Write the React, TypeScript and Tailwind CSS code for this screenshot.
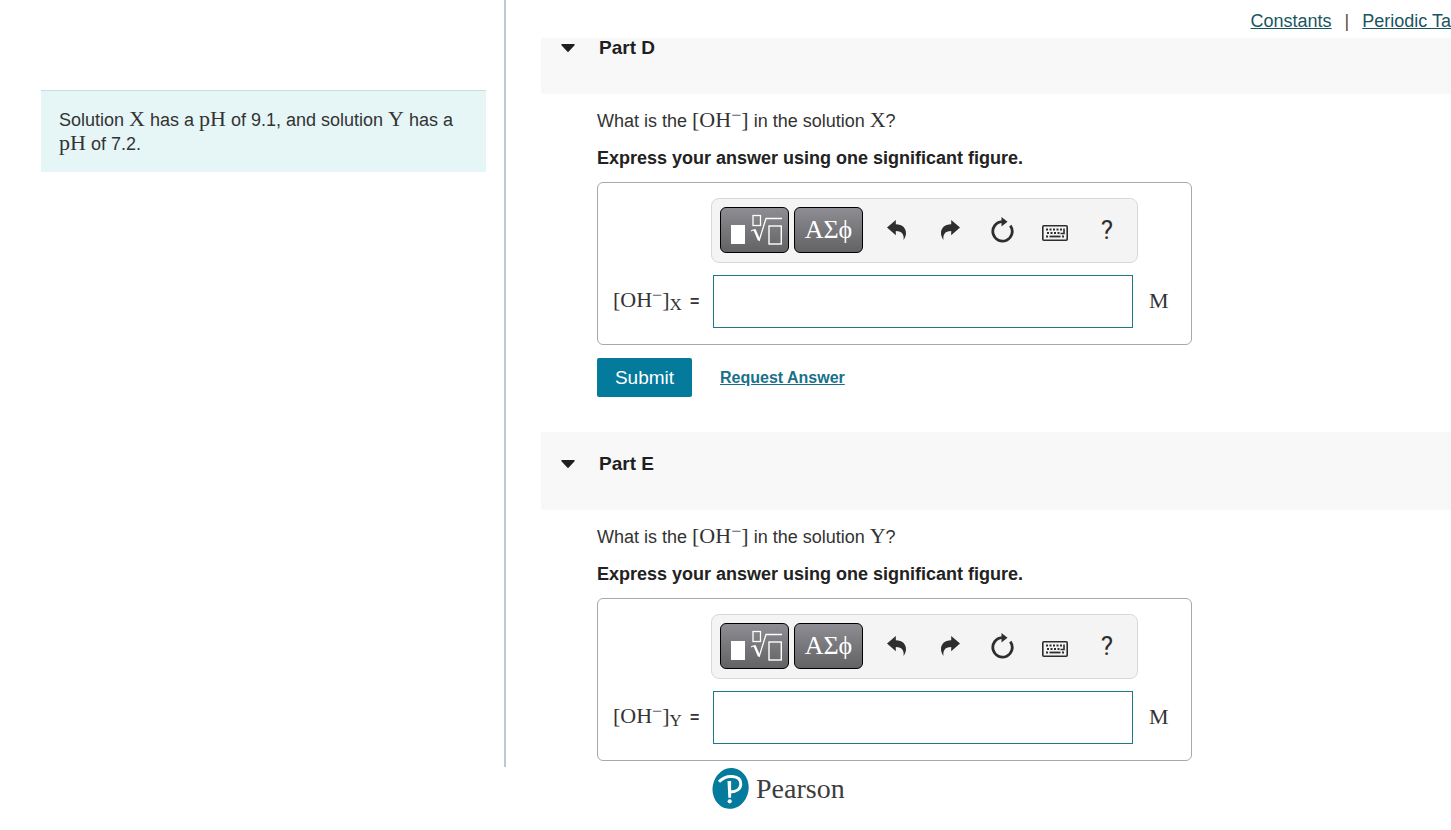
import type { ReactNode } from "react";

function Sym({ children }: { children: ReactNode }) {
  return (
    <span className="font-['Liberation_Serif',serif] text-[22px] leading-none">{children}</span>
  );
}

function Hydroxide() {
  return (
    <span className="font-['Liberation_Serif',serif] text-[22px] leading-none">
      [OH<sup className="top-0 align-[6px] text-lg leading-none text-[#666]">−</sup>]
    </span>
  );
}

function TemplateIcon() {
  return (
    <svg width="54" height="32" viewBox="0 0 54 32" fill="none" stroke="#fff" aria-hidden="true">
      <rect x="3" y="11" width="14" height="19" fill="#fff" stroke="none" />
      <rect x="25" y="1.500" width="7.500" height="10" strokeWidth="1.300" />
      <path d="M23 17l3.500-1.500" strokeWidth="1.200" />
      <path d="M26.500 15.500l4.500 10.500" strokeWidth="2.400" />
      <path d="M31 27L38 4.500H54" strokeWidth="1.300" />
      <rect x="41" y="12" width="12.300" height="18" strokeWidth="1.400" />
    </svg>
  );
}

function UndoIcon() {
  return (
    <svg width="20" height="20" viewBox="0 0 20 20" fill="#2e2e2e" aria-hidden="true">
      <path d="M0 7.400L8.800 0v4.200C15.500 4.200 19 8.200 19 13c0 2.700-1 5.200-2.600 7 .5-2 .4-4.200-.8-6-1.300-2-3.600-2.900-6.800-2.900v4.200z" />
    </svg>
  );
}

function RedoIcon() {
  return (
    <svg width="20" height="20" viewBox="0 0 20 20" fill="#2e2e2e" aria-hidden="true">
      <path d="M20 7.400L11.200 0v4.200C4.500 4.200 1 8.200 1 13c0 2.700 1 5.200 2.600 7-.5-2-.4-4.200.8-6 1.300-2 3.600-2.900 6.800-2.900v4.200z" />
    </svg>
  );
}

function ResetIcon() {
  return (
    <svg width="24" height="26" viewBox="0 0 24 26" fill="none" aria-hidden="true">
      <path d="M20.300 8.600A9.700 9.700 0 1 1 12 4.700" stroke="#2e2e2e" strokeWidth="2.800" />
      <path d="M11.500 0l6 4.700-6 4.800z" fill="#2e2e2e" />
    </svg>
  );
}

function KeyboardIcon() {
  return (
    <svg width="26" height="16" viewBox="0 0 26 16" fill="none" stroke="#2e2e2e" aria-hidden="true">
      <rect x="0.800" y="0.800" width="24.400" height="14.400" rx="1" strokeWidth="1.600" />
      <path d="M4 4.500h16M5 8h14M4 11.500h2M20 11.500h2" strokeWidth="1.800" strokeDasharray="2 1.500" />
      <path d="M7.500 11.500h11" strokeWidth="1.800" />
      <path d="M22 3.500v5h-3.500" strokeWidth="1.600" />
    </svg>
  );
}

function PearsonMark() {
  return (
    <svg width="38" height="42" viewBox="0 0 38 42" aria-hidden="true">
      <ellipse cx="18.500" cy="20.500" rx="18" ry="20.500" fill="#047a9c" transform="rotate(10 19 21)" />
      <path
        d="M7 13.800C11 9.600 16 8 20.500 8.500c5.500.5 8.500 3.400 8.300 7.600-.3 5-4.500 7.800-10.300 7.900"
        fill="none"
        stroke="#fff"
        strokeWidth="3"
      />
      <path d="M15.500 13h3.600v16.700h-2.800z" fill="#fff" />
      <circle cx="17.700" cy="33.300" r="2.100" fill="#fff" />
    </svg>
  );
}

const darkButton =
  "flex h-[46px] w-[69px] items-center justify-center overflow-hidden rounded-md border border-black bg-linear-to-b from-[#8d8d93] to-[#636365] text-white";
const plainButton = "flex h-[46px] w-10 items-center justify-center";

function Toolbar() {
  return (
    <div
      role="toolbar"
      className="flex h-[65px] w-[427px] items-center rounded-lg border border-[#d8d8d8] bg-[#f4f4f4] pb-0.5 pl-2"
    >
      <button aria-label="Templates" className={darkButton}>
        <TemplateIcon />
      </button>
      <button
        aria-label="Symbols"
        className={`${darkButton} ml-[5px] font-['Liberation_Serif',serif] text-[26px] leading-none`}
      >
        ΑΣϕ
      </button>
      <div className="flex w-[264px] justify-between pl-3.5">
        <button aria-label="Undo" className={plainButton}><UndoIcon /></button>
        <button aria-label="Redo" className={plainButton}><RedoIcon /></button>
        <button aria-label="Reset" className={plainButton}><ResetIcon /></button>
        <button aria-label="Keyboard" className={`${plainButton} pt-1.5`}><KeyboardIcon /></button>
        <button aria-label="Help" className={`${plainButton} font-[Roboto,sans-serif] text-[26px] leading-none text-[#2e2e2e]`}>
          ?
        </button>
      </div>
    </div>
  );
}

function Part({ letter, solution, className, children }: {
  letter: string;
  solution: string;
  className: string;
  children?: ReactNode;
}) {
  const id = `answer-${letter}`;
  return (
    <section>
      <div className={`bg-[#f8f8f8] pb-9 ${className}`}>
        <button className="flex items-center pl-5 text-[19px] leading-5 font-bold text-[#1f1f1f]">
          <svg width="14" height="8" viewBox="0 0 14 8" fill="#1f1f1f" aria-hidden="true">
            <path d="M1 0h12a.8.8 0 0 1 .6 1.300L8 7.300a1.300 1.300 0 0 1-2 0L.4 1.300A.8.800 0 0 1 1 0z" />
          </svg>
          <span className="ml-6">Part {letter}</span>
        </button>
      </div>
      <div className="pt-3 pl-14">
        <p className="h-7 leading-7">
          What is the <Hydroxide /> in the solution <Sym>{solution}</Sym>?
        </p>
        <p className="mt-3 leading-6 font-bold text-[#222]">
          Express your answer using one significant figure.
        </p>
        <div className="mt-3 w-full max-w-[595px] rounded-md border border-[#a9a9a9] pt-[15px] pb-4 pl-[15px]">
          <div className="pl-[98px]">
            <Toolbar />
          </div>
          <div className="mt-3 flex items-center">
            <label htmlFor={id} className="w-[100px] shrink-0 pb-0.5 whitespace-nowrap">
              <Hydroxide />
              <sub className="bottom-0 align-[-3px] font-['Liberation_Serif',serif] text-[17px] leading-none">{solution}</sub>
              <span className="ml-2 text-base leading-none font-bold">=</span>
            </label>
            <input id={id} type="text" className="h-[53px] w-[420px] border border-[#1b7a85] bg-white px-2" />
            <span className="ml-4"><Sym>M</Sym></span>
          </div>
        </div>
        {children}
      </div>
    </section>
  );
}

export default function App() {
  return (
    <div className="overflow-hidden bg-white font-['Liberation_Sans',Arial,sans-serif] text-lg text-[#333]">
      <main className="flex">
        <aside className="w-[506px] shrink-0 border-r-2 border-[#bcc8d4] pt-[90px] pr-[18px] pl-[41px]">
          <div className="border-t border-[#c9dede] bg-[#e6f6f7] px-[18px] pt-[17px] pb-4 leading-[23px]">
            Solution <Sym>X</Sym> has a <Sym>pH</Sym> of 9.1, and solution <Sym>Y</Sym> has a{" "}
            <Sym>pH</Sym> of 7.2.
          </div>
        </aside>
        <div className="min-w-0 flex-1 pb-1.5 pl-[35px]">
          <nav className="flex h-[38px] items-center justify-end pt-1 whitespace-nowrap text-[#19555f]">
            <a href="#constants" className="underline">Constants</a>
            <span className="mx-[13px] text-[#5a4a44]">|</span>
            <a href="#periodic" className="underline">Periodic Ta</a>
          </nav>
          <Part letter="D" solution="X" className="">
            <div className="mt-[13px] mb-[35px] flex items-center gap-7">
              <button className="h-[39px] w-[95px] rounded-xs bg-[#047a9c] text-[19px] text-white">Submit</button>
              <a href="#answer" className="text-base font-bold text-[#19708a] underline">Request Answer</a>
            </div>
          </Part>
          <Part letter="E" solution="Y" className="pt-[22px]" />
        </div>
      </main>
      <footer className="flex items-center gap-1.5 pt-px pl-[712px]">
        <PearsonMark />
        <span className="font-['Liberation_Serif',serif] text-[28px] leading-none text-[#3d3d3d]">Pearson</span>
      </footer>
    </div>
  );
}
